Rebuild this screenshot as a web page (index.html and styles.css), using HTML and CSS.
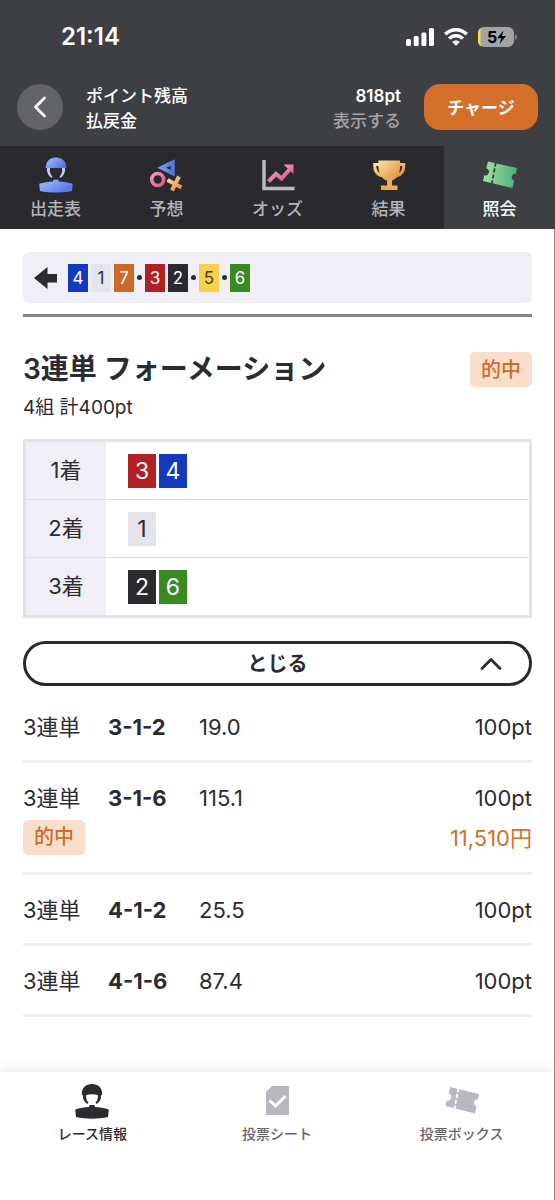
FILE: index.html
```html
<!DOCTYPE html>
<html lang="ja">
<head>
<meta charset="utf-8">
<meta name="viewport" content="width=device-width, initial-scale=1">
<title>投票照会</title>
<link rel="stylesheet" href="styles.css">
</head>
<body>
<div class="app">
  <div class="status">
    <time class="clock">21:14</time>
    <div class="status-icons">
      <svg width="28" height="18" viewBox="0 0 28 18" fill="#fff" aria-hidden="true"><rect y="11" width="5" height="7" rx="1.5"/><rect x="7.7" y="8" width="5" height="10" rx="1.5"/><rect x="15.4" y="4.500" width="5" height="13.500" rx="1.5"/><rect x="23" y="0" width="5" height="18" rx="1.5"/></svg>
      <svg width="24" height="18" viewBox="0 0 24 18" fill="none" stroke="#fff" stroke-width="3.400" aria-hidden="true"><path d="M1.300 6.300C7.500 .3 16.500 .3 22.700 6.300"/><path d="M5.200 10.600C9 6.800 15 6.800 18.800 10.600"/><path d="M12 17.800 8.200 14C10.300 12 13.700 12 15.800 14Z" fill="#fff" stroke="none"/></svg>
      <svg width="39" height="20" viewBox="0 0 39 20" aria-label="5%"><defs><clipPath id="bat"><rect width="36" height="20" rx="6"/></clipPath></defs><g clip-path="url(#bat)"><rect width="36" height="20" fill="#a3a3a5"/><rect width="2.500" height="20" fill="#f5e04c"/></g><path d="M37 7c2.400.6 2.400 5.400 0 6z" fill="#8e8e91"/><text x="9" y="15.500" class="battery-text">5</text><path d="M25.500 3.500 19 11.200h4.200L21.600 17l6.400-8h-4.100z" fill="#000"/></svg>
    </div>
  </div>

  <header class="header">
    <button class="back" aria-label="戻る"><svg width="14" height="22" viewBox="0 0 14 22" fill="none" stroke="#fff" stroke-width="2.800" stroke-linecap="round" stroke-linejoin="round" aria-hidden="true"><path d="M11.500 2 2.500 11l9 9"/></svg></button>
    <dl class="balance">
      <div class="balance-row"><dt>ポイント残高</dt><dd class="points">818pt</dd></div>
      <div class="balance-row"><dt>払戻金</dt><dd><button class="show">表示する</button></dd></div>
    </dl>
    <button class="charge">チャージ</button>
  </header>

  <nav class="tabs" aria-label="レース">
    <a class="tab" href="#entry"><svg width="36" height="36" viewBox="0 0 36 36" aria-hidden="true"><defs><linearGradient id="blue" x1="0" y1="0" x2="1" y2="0.600"><stop offset="0" stop-color="#a9c0ff"/><stop offset="1" stop-color="#5477e8"/></linearGradient></defs><path d="M7.800 11C7.500 4.500 12 .5 18 .5S28.500 4.500 28.200 11z" fill="url(#blue)"/><path d="M9 11h3c-.6 3.500.2 6.200 2.300 8.500L13.500 21C10 18.500 8.500 15 9 11zM27 11h-3c.6 3.500-.2 6.200-2.300 8.500l.8 1.500c3.500-2.500 5-6 4.500-10z" fill="#c7ccf1"/><path d="M15 24.500l.5-1.700h5l.5 1.700c4.500.3 9.300 1 13.800 2.200l-.8 7.300c-10 2-22 2-32 0l-.8-7.300c4.500-1.200 9.300-1.900 13.800-2.200z" fill="url(#blue)"/></svg><span>出走表</span></a>
    <a class="tab" href="#forecast"><svg width="36" height="36" viewBox="0 0 36 36" fill="none" aria-hidden="true"><defs><linearGradient id="tri"><stop stop-color="#6b9cf7"/><stop offset="1" stop-color="#4d78dc"/></linearGradient><linearGradient id="pink" x2="1" y2="1"><stop stop-color="#f7a0bc"/><stop offset="1" stop-color="#e0568f"/></linearGradient><linearGradient id="gold" x2="1" y2="1"><stop stop-color="#ffe0a0"/><stop offset="1" stop-color="#e08b36"/></linearGradient></defs><path d="M23.700 5.500v10.800L12.800 10.800z" stroke="url(#tri)" stroke-width="4"/><circle cx="8.700" cy="22.500" r="6" stroke="url(#pink)" stroke-width="3.500"/><path d="m18.500 23 14 7.500M30 19.500l-7 14" stroke="url(#gold)" stroke-width="4"/></svg><span>予想</span></a>
    <a class="tab" href="#odds"><svg width="36" height="36" viewBox="0 0 36 36" fill="none" aria-hidden="true"><path d="M4 3v28.500h30.500" stroke="#babbbd" stroke-width="3.500"/><path d="m8.500 24.500 7.500-7.500 5.500 4.500 8.500-9.500" stroke="url(#pink)" stroke-width="4"/><path d="M23.500 7.500h10V17z" fill="url(#pink)"/></svg><span>オッズ</span></a>
    <a class="tab" href="#result"><svg width="36" height="36" viewBox="0 0 36 36" fill="none" aria-hidden="true"><path d="M9.500 7.500H3.700C3.500 14 6 18 11.500 19M27 7.500h5.800C33 14 30.500 18 25 19" stroke="url(#gold)" stroke-width="3"/><path d="M7.500 3.500h21.500c1 11-1.600 17-7.500 20h-6C9.600 21 6.500 15 7.500 3.500z" fill="url(#gold)"/><path d="M16 22h5v6.500h5.500V33H10v-4.500h6z" fill="#f0a953"/></svg><span>結果</span></a>
    <a class="tab tab-active" href="#inquiry" aria-current="page"><svg width="36" height="36" viewBox="0 0 36 36" aria-hidden="true"><defs><linearGradient id="green" x2="1"><stop stop-color="#a2e5a2"/><stop offset="1" stop-color="#4aae7b"/></linearGradient></defs><path d="M6 4.500 35 11l-1.200 6a3.200 3.200 0 0 0-1.500 6.500L30.500 31 1 24l1.300-5.800a3.600 3.600 0 0 0 2-7z" fill="url(#green)"/><path d="M13.800 5.500 9.800 27" stroke="#3e3f43" stroke-width="1.800" stroke-dasharray="4.200 1.800"/></svg><span>照会</span></a>
  </nav>

  <main class="main">
    <section class="lineup" aria-label="並び">
      <svg width="23" height="22" viewBox="0 0 23 22" aria-hidden="true"><path d="M0 11 13.500 0v7H23v8.500h-9.500V22z" fill="#2c2b30"/></svg>
      <div class="line">
        <span class="num blue">4</span><span class="num white">1</span><span class="num orange">7</span><i class="dot"></i><span class="num red">3</span><span class="num black">2</span><i class="dot"></i><span class="num yellow">5</span><i class="dot"></i><span class="num green">6</span>
      </div>
    </section>
    <hr class="rule">

    <div class="title-row"><h1>3連単 フォーメーション</h1><span class="hit">的中</span></div>
    <p class="summary">4組 計400pt</p>

    <table class="formation">
      <tr><th scope="row">1着</th><td><div class="picks"><span class="num big red">3</span><span class="num big blue">4</span></div></td></tr>
      <tr><th scope="row">2着</th><td><div class="picks"><span class="num big white">1</span></div></td></tr>
      <tr><th scope="row">3着</th><td><div class="picks"><span class="num big black">2</span><span class="num big green">6</span></div></td></tr>
    </table>

    <button class="toggle" aria-expanded="true"><span>とじる</span><svg width="22" height="14" viewBox="0 0 22 14" fill="none" stroke="#2c2b30" stroke-width="2.800" stroke-linecap="round" stroke-linejoin="round" aria-hidden="true"><path d="m2 11.500 9-9 9 9"/></svg></button>

    <ul class="bets">
      <li class="bet"><span>3連単</span><b>3-1-2</b><span>19.0</span><span class="amount">100pt</span></li>
      <li class="bet"><span>3連単</span><b>3-1-6</b><span>115.1</span><span class="amount">100pt</span><div class="payout"><span class="hit">的中</span><span>11,510円</span></div></li>
      <li class="bet"><span>3連単</span><b>4-1-2</b><span>25.5</span><span class="amount">100pt</span></li>
      <li class="bet"><span>3連単</span><b>4-1-6</b><span>87.4</span><span class="amount">100pt</span></li>
    </ul>
  </main>

  <nav class="bottom" aria-label="メイン">
    <a class="item item-active" href="#race"><svg width="36" height="36" viewBox="0 0 36 36" fill="#2c2b30" aria-hidden="true"><path d="M7.800 11.500C7.500 5 12 1 18 1s10.500 4 10.200 10.500L27 12.500c.3 3.500-1 6.500-4.500 8.500l-1-1.500c2-2 2.700-4.500 2.300-7.500-4-1-7.600-1-11.600 0-.4 3 .3 5.500 2.300 7.500l-1 1.500C10 19 8.700 16 9 12.500z"/><path d="M15 24l.5-2h5l.5 2c4.500.3 9.300 1.100 13.800 2.400L34 34c-10 2.300-22 2.300-32 0l-.8-7.600C5.700 25.100 10.500 24.300 15 24z"/></svg><span>レース情報</span></a>
    <a class="item" href="#sheet"><svg width="36" height="36" viewBox="0 0 36 36" aria-hidden="true"><path d="M13 3h17v29H7V9z" fill="#b9b8c1"/><path d="m10.500 17.500 6 5.500L26.500 13" fill="none" stroke="#fff" stroke-width="3"/></svg><span>投票シート</span></a>
    <a class="item" href="#box"><svg width="36" height="36" viewBox="0 0 36 36" aria-hidden="true"><path d="M6 4 35 11l-1 5.500a3.200 3.200 0 0 0-1.500 6.500L31 30.500 1.500 23l1.200-5.500a3.600 3.600 0 0 0 2-7z" fill="#b9b8c1"/><path d="M14.500 5 10.300 27" stroke="#fff" stroke-width="1.800" stroke-dasharray="4.200 1.800"/></svg><span>投票ボックス</span></a>
  </nav>
</div>
</body>
</html>
```

FILE: styles.css
```css
* { box-sizing: border-box; }
body { margin: 0; background: #fff; color: #2c2b30; font-family: Inter, "Noto Sans CJK JP", sans-serif; }
button { font: inherit; color: inherit; border: 0; padding: 0; background: none; cursor: pointer; }
a { text-decoration: none; }
svg { display: block; flex: none; }

.app { min-height: 100vh; display: flex; flex-direction: column; border-right: 1px solid #8e8e92; background: #fff; }

.status { height: 74px; padding: 0 38px 0 61px; display: flex; align-items: center; justify-content: space-between; background: #3e3f43; margin-right: -1px; }
.clock { color: #fff; font-size: 24px; line-height: 28px; font-weight: 600; }
.status-icons { display: flex; align-items: center; gap: 10px; }
.battery-text { font-size: 16px; font-weight: 700; fill: #000; }

.header { display: flex; align-items: flex-start; padding: 10px 17px 12px; background: #3e3f43; color: #fff; margin-right: -1px; }
.back { width: 46px; height: 46px; border-radius: 50%; background: #636469; display: grid; place-items: center; }
.balance { flex: 1; margin: 0 23px; font-size: 17px; line-height: 25px; font-weight: 500; }
.balance-row { display: flex; justify-content: space-between; }
.balance dd { margin: 0; }
.points { font-weight: 600; }
.show { display: block; color: #a3a3a8; }
.charge { width: 114px; height: 46px; padding-bottom: 2px; border-radius: 16px; background: #d4702a; font-size: 17px; font-weight: 700; }

.tabs { display: grid; grid-template-columns: repeat(5, 1fr); background: #2a292e; margin-right: -1px; }
.tab { height: 83px; padding-top: 11px; display: flex; flex-direction: column; align-items: center; gap: 3px; color: #b5b5ba; font-size: 17px; line-height: 26px; font-weight: 500; }
.tab-active { background: #3e3f43; color: #fff; }

.main { flex: 1; padding: 23px 22px 24px 23px; }
.lineup { display: flex; align-items: center; gap: 11px; height: 51px; padding: 0 11px; border-radius: 6px; background: #f0eff5; }
.line, .picks { display: flex; align-items: center; gap: 3px; }
.num { width: 20px; height: 28px; display: grid; place-items: center; font-size: 17px; color: #fff; }
.num.big { width: 28px; height: 34px; font-size: 23px; }
.dot { width: 5px; height: 5px; border-radius: 50%; background: #2c2b30; }
.num.blue { background: #1339bd; }
.num.white { background: #e4e5ea; color: #2c2b30; }
.num.orange { background: #c96a2a; }
.num.red { background: #b12024; }
.num.black { background: #2a292e; }
.num.yellow { background: #f9d04c; color: #4a3c18; }
.num.green { background: #3a8a22; }
.rule { margin: 11px 0 34px; border: 0; height: 3px; background: #858585; }

.title-row { display: flex; justify-content: space-between; align-items: center; }
h1 { margin: 0; font-size: 28px; line-height: 36px; font-weight: 600; }
.hit { width: 62px; height: 35px; padding-bottom: 2px; border-radius: 5px; display: grid; place-items: center; background: #f7dfcb; color: #cf6c2a; font-size: 20px; font-weight: 500; }
.summary { margin: 8px 0 18px; font-size: 19px; line-height: 26px; }

.formation { width: 100%; border-collapse: separate; border-spacing: 0; border: 3px solid #e3e2ea; font-size: 22px; }
.formation th { width: 80px; height: 57px; padding: 0 0 6px; font-weight: 400; background: #f0eff5; }
.formation td { padding: 0 22px; }
.formation tr + tr > * { border-top: 1px solid #e0dfe8; height: 58px; }

.toggle { width: 100%; height: 45px; margin-top: 23px; padding: 0 27px; display: grid; grid-template-columns: 22px 1fr 22px; align-items: center; border: 3px solid #2a292e; border-radius: 23px; font-size: 20px; font-weight: 600; }
.toggle span { grid-column: 2; padding-bottom: 3px; }

.bets { list-style: none; margin: 6px 0 0; padding: 0; font-size: 22px; line-height: 32px; }
.bet { display: grid; grid-template-columns: 85px 91px 1fr auto; padding: 19px 0 17px; border-bottom: 3px solid #f0eff4; }
.bet b { font-weight: 700; }
.amount { text-align: right; }
.payout { grid-column: 1 / -1; display: flex; justify-content: space-between; align-items: center; margin-top: 6px; color: #d4702a; }

.bottom { position: sticky; bottom: 0; display: grid; grid-template-columns: repeat(3, 1fr); height: 128px; padding-top: 11px; background: #fff; box-shadow: 0 -2px 12px rgba(0, 0, 0, .1); }
.item { display: flex; flex-direction: column; align-items: center; gap: 4px; color: #66656b; font-size: 14px; line-height: 22px; font-weight: 500; }
.item-active { color: #2c2b30; }
```
